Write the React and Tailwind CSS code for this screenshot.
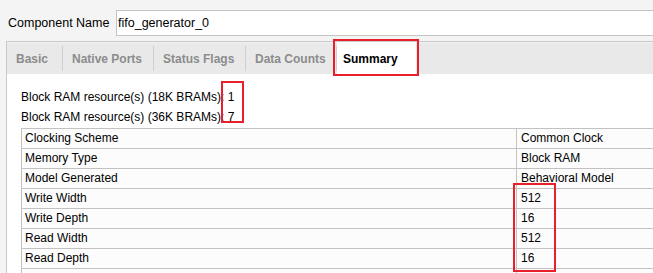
import React from "react";

const rows = [
  ["Clocking Scheme", "Common Clock"],
  ["Memory Type", "Block RAM"],
  ["Model Generated", "Behavioral Model"],
  ["Write Width", "512"],
  ["Write Depth", "16"],
  ["Read Width", "512"],
  ["Read Depth", "16"],
  ["", ""],
];

const tabs = [
  { label: "Basic", w: "w-[56px]" },
  { label: "Native Ports", w: "w-[91px]" },
  { label: "Status Flags", w: "w-[92px]" },
  { label: "Data Counts", w: "w-[91px]" },
];

export default function App() {
  return (
    <div
      className="relative w-[653px] h-[273px] overflow-hidden bg-[#f4f4f4] text-black"
      style={{ fontFamily: '"Liberation Sans", Arial, sans-serif' }}
    >
      <div className="grid grid-cols-[108px_1fr] items-center pt-[10px] pl-[8px] h-[36px]">
        <div className="text-[12.5px] leading-none whitespace-nowrap">Component Name</div>
        <div className="h-[26px] bg-white border border-r-0 border-[#c4c4c4] flex items-center pl-[1px] text-[12.5px]">
          fifo_generator_0
        </div>
      </div>
      <div className="mt-[5px] ml-[6px] h-[300px] border-l border-t border-[#c8c8c8] bg-white">
        <div className="flex h-[32px] bg-[#e9e9e9] border-t border-[#f2f2f2]">
          {tabs.map((t) => (
            <div key={t.label} className={`${t.w} shrink-0 flex items-center`}>
              <div className="flex-1 pl-[9px] text-[12px] font-bold text-[#8c8c8c] whitespace-nowrap">{t.label}</div>
              <div className="w-px h-[25px] bg-[#cfcfcf]"></div>
            </div>
          ))}
          <div className="w-[79px] shrink-0 -mt-px h-[33px] bg-white flex items-center pl-[6px] text-[12px] font-bold">
            Summary
          </div>
        </div>
        <div className="pl-[14px] pt-[13px] text-[12px]">
          <div className="h-[20px] leading-[20px] whitespace-nowrap">Block RAM resource(s) (18K BRAMs): 1</div>
          <div className="h-[20px] leading-[20px] whitespace-nowrap">Block RAM resource(s) (36K BRAMs): 7</div>
          <div className="mt-px border-t border-l border-[#c2c2c2]">
            {rows.map(([a, b], i) => (
              <div key={i} className="flex h-[20px] border-b border-[#c2c2c2] bg-[#fcfcfc]">
                <div className="w-[495px] shrink-0 border-r border-[#c2c2c2] pl-[3px] leading-[19px]">{a}</div>
                <div className="flex-1 pl-[4px] leading-[19px] whitespace-nowrap">{b}</div>
              </div>
            ))}
          </div>
        </div>
      </div>
      <div className="absolute left-[333px] top-[39px] w-[86px] h-[37px] border-2 border-[#e8202a]"></div>
      <div className="absolute left-[221px] top-[81px] w-[23px] h-[42px] border-2 border-[#e8202a]"></div>
      <div className="absolute left-[513px] top-[183px] w-[43px] h-[89px] border-2 border-[#e8202a]"></div>
    </div>
  );
}
